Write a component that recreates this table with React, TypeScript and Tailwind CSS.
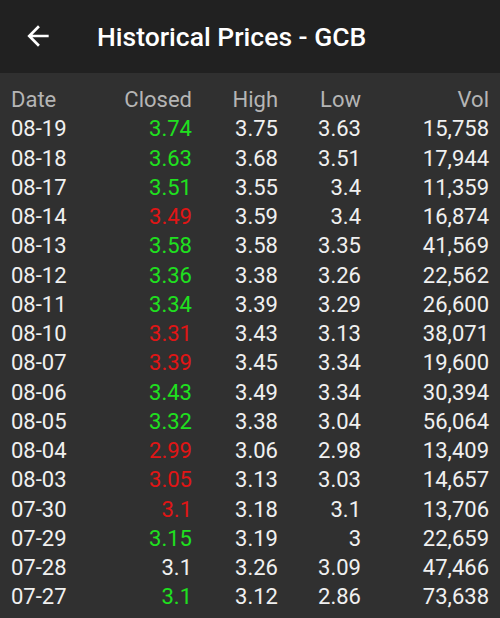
type Row = [string, string, string, string, string, "up" | "down" | "flat"];

const rows: Row[] = [
  ["08-19", "3.74", "3.75", "3.63", "15,758", "up"],
  ["08-18", "3.63", "3.68", "3.51", "17,944", "up"],
  ["08-17", "3.51", "3.55", "3.4", "11,359", "up"],
  ["08-14", "3.49", "3.59", "3.4", "16,874", "down"],
  ["08-13", "3.58", "3.58", "3.35", "41,569", "up"],
  ["08-12", "3.36", "3.38", "3.26", "22,562", "up"],
  ["08-11", "3.34", "3.39", "3.29", "26,600", "up"],
  ["08-10", "3.31", "3.43", "3.13", "38,071", "down"],
  ["08-07", "3.39", "3.45", "3.34", "19,600", "down"],
  ["08-06", "3.43", "3.49", "3.34", "30,394", "up"],
  ["08-05", "3.32", "3.38", "3.04", "56,064", "up"],
  ["08-04", "2.99", "3.06", "2.98", "13,409", "down"],
  ["08-03", "3.05", "3.13", "3.03", "14,657", "down"],
  ["07-30", "3.1", "3.18", "3.1", "13,706", "down"],
  ["07-29", "3.15", "3.19", "3", "22,659", "up"],
  ["07-28", "3.1", "3.26", "3.09", "47,466", "flat"],
  ["07-27", "3.1", "3.12", "2.86", "73,638", "up"],
  ["07-24", "3.15", "3.21", "2.74", "33,641", "up"],
];

const grid = "grid grid-cols-[99px_82px_86px_83px_128px] items-center h-[29.25px]";

export default function App() {
  return (
    <div
      className="w-[500px] h-[618px] overflow-hidden bg-[#303030]"
      style={{ fontFamily: "Roboto, 'Liberation Sans', sans-serif" }}
    >
      <div className="h-[73px] bg-[#212121] flex items-center">
        {/* back arrow */}
        <svg className="ml-[22px] mt-[-1px]" width="32" height="32" viewBox="0 0 24 24" fill="#ffffff">
          <path d="M20 11H7.83l5.59-5.59L12 4l-8 8 8 8 1.41-1.41L7.83 13H20v-2z" />
        </svg>
        <div className="ml-[43px] text-white text-[26.5px] font-medium">
          Historical Prices - GCB
        </div>
      </div>

      <div className="px-[11px] pt-[10px] text-[22px]">
        <div className={`${grid} text-[#b5b5b5]`}>
          <div>Date</div>
          <div className="text-right">Closed</div>
          <div className="text-right">High</div>
          <div className="text-right">Low</div>
          <div className="text-right">Vol</div>
        </div>
        {rows.map((r) => (
          <div key={r[0]} className={`${grid} text-[#f0f0f0]`}>
            <div>{r[0]}</div>
            <div
              className={
                r[5] === "up"
                  ? "text-right text-[#1fe01f]"
                  : r[5] === "down"
                  ? "text-right text-[#e01515]"
                  : "text-right"
              }
            >
              {r[1]}
            </div>
            <div className="text-right">{r[2]}</div>
            <div className="text-right">{r[3]}</div>
            <div className="text-right">{r[4]}</div>
          </div>
        ))}
      </div>
    </div>
  );
}
